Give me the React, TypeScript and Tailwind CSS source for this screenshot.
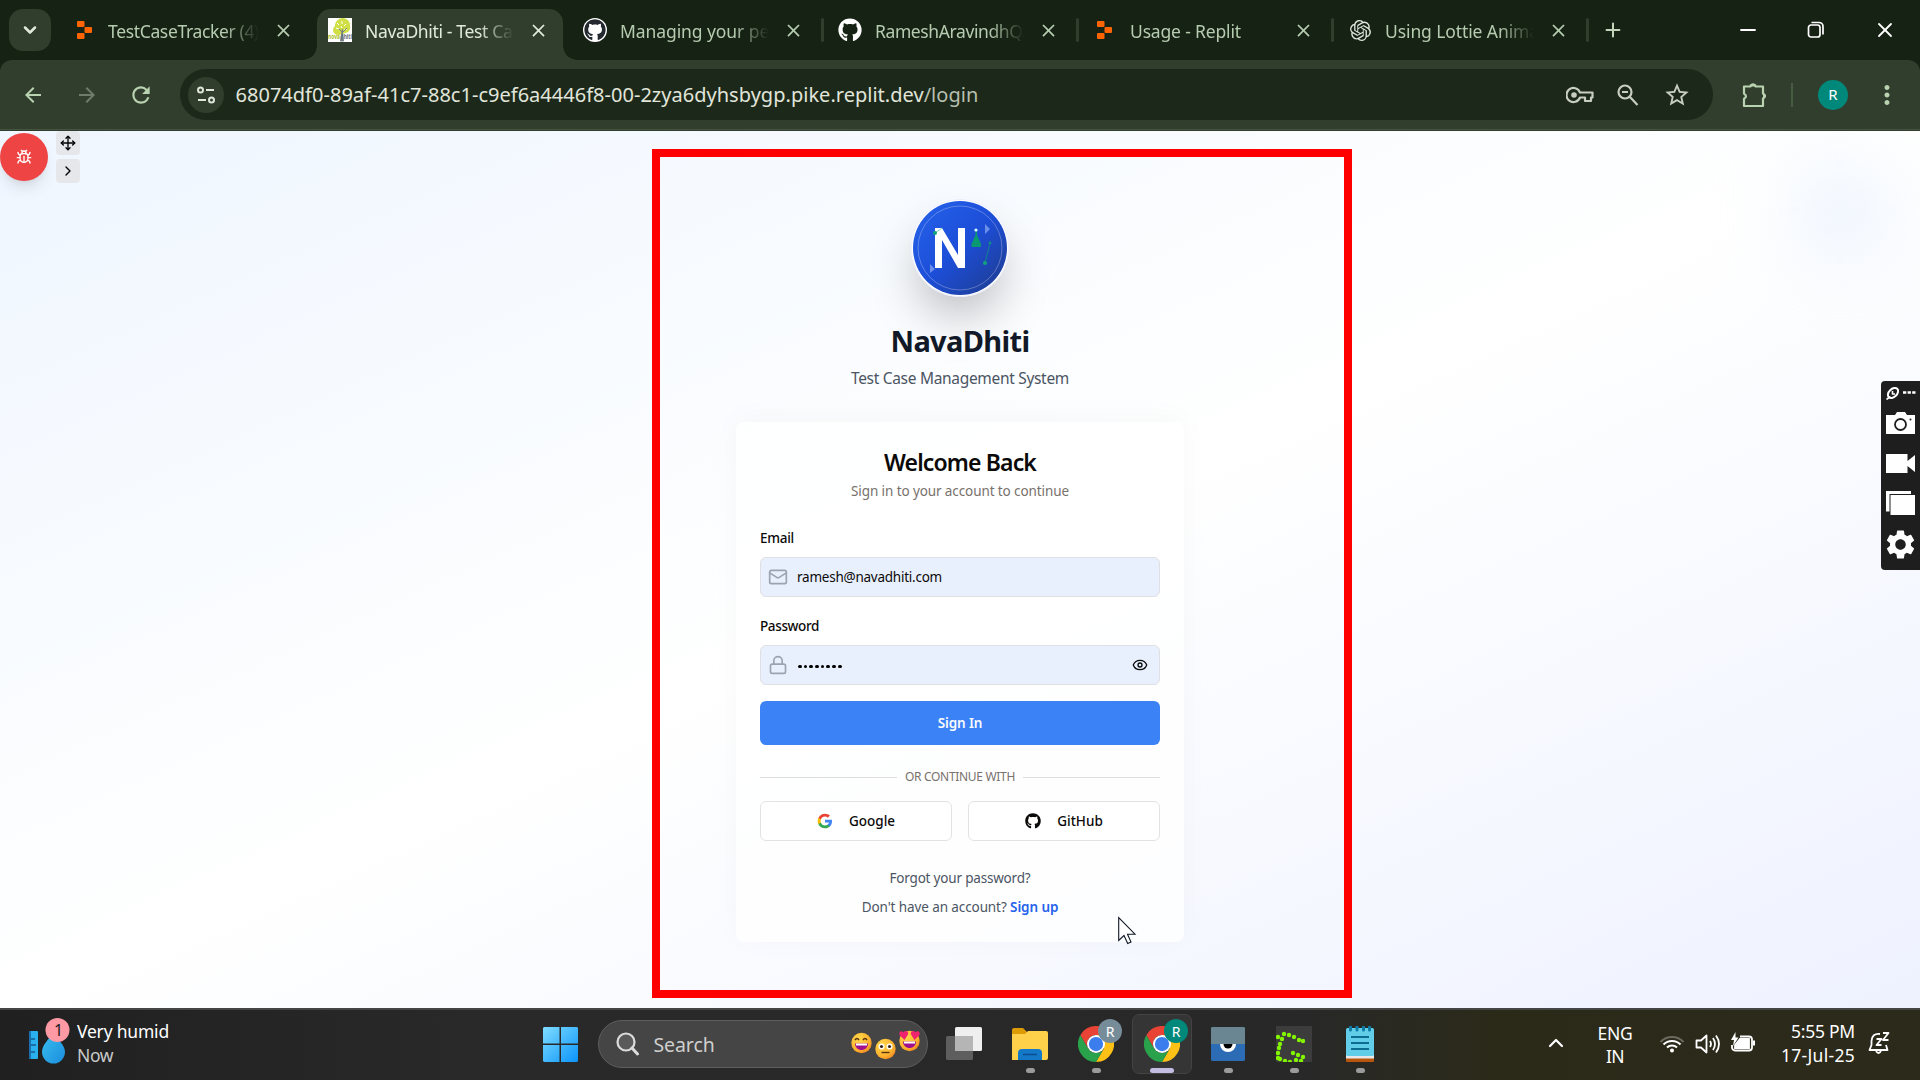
import React from "react";
import { ChevronDown, ChevronRight, ChevronUp, Bug, Eye, Lock, Mail, Minus, Move, Plus, X } from "lucide-react";
import { FaGithub } from "react-icons/fa";
import { SiOpenai } from "react-icons/si";
import { MdClose, MdStarBorder, MdRefresh, MdOutlineExtension, MdMoreVert, MdArrowBack, MdArrowForward, MdSettings } from "react-icons/md";

function ReplitIcon() {
  return (
    <svg width="15" height="18" viewBox="0 0 15 18" className="ml-[4px] fill-[#fc6404]">
      <rect x="0" y="0" width="7.5" height="6" rx="1" />
      <rect x="7.5" y="6" width="7.5" height="6" rx="1" />
      <rect x="0" y="12" width="7.5" height="6" rx="1" />
    </svg>
  );
}

function TreeIcon() {
  return (
    <svg width="24" height="24" viewBox="0 0 24 24">
      <rect width="24" height="24" fill="#fff" />
      <path d="M11 17c-3 .5-6-2-6-5 0-2 1-3 2-4 0-5 4-8 8-8 4 .5 7 3 7 7 1 4-1 8-5 8l-2 1z" fill="#cfdf45" />
      <path d="M9 5l2 2M14 3v3M18 6l-2 2M8 10l3 1M19 11l-3 1M13 8l1 2" stroke="#fff" strokeWidth="1" />
      <path d="M14.5 11v6l1 6h-3l1-6zM14 14l-3-3M15 14l4-4" stroke="#777f86" fill="#777f86" strokeWidth="1" />
      <text x="0" y="21" fontSize="6.5" fontWeight="700" textLength="12" lengthAdjust="spacingAndGlyphs" fill="#a9bf1e" fontFamily="Noto Sans, sans-serif">nova</text>
      <text x="12.500" y="21" fontSize="6.5" fontWeight="700" textLength="11.500" lengthAdjust="spacingAndGlyphs" fill="#686f78" fontFamily="Noto Sans, sans-serif">dhiti</text>
    </svg>
  );
}

function GithubDark() {
  return (
    <span className="flex size-6 items-center justify-center rounded-full bg-white">
      <FaGithub className="size-[22px] rounded-full bg-white text-[#24292f]" />
    </span>
  );
}

type TabProps = { icon: React.ReactNode; title: string; active?: boolean; divider?: boolean; cls: string };
function Tab({ icon, title, active, divider, cls }: TabProps) {
  return (
    <div className="flex w-[255px] shrink-0 items-end">
      <div className={active ? "relative flex h-[51px] w-[246px] items-center rounded-t-[14px] bg-[#313e2d] pl-[11px] text-[#e1eadb]" : "relative flex h-[51px] w-[246px] items-center pl-[11px] text-[#b6ccb0]"}>
        {active && <span className="absolute bottom-0 -left-[14px] size-[14px] bg-[radial-gradient(circle_at_0_0,transparent_13.5px,#313e2d_14px)]" />}
        {active && <span className="absolute bottom-0 -right-[14px] size-[14px] bg-[radial-gradient(circle_at_100%_0,transparent_13.5px,#313e2d_14px)]" />}
        <span className="mb-[9px] flex w-6 items-center">{icon}</span>
        <span className="mb-[7px] ml-[11px] w-[152px] overflow-hidden whitespace-nowrap pl-[2px] text-[17.5px] leading-[26px] [mask-image:linear-gradient(to_right,black_116px,transparent_151px)]">
          <span className={cls}>{title}</span>
        </span>
        <MdClose className="mb-[9px] ml-[13px] size-[21px] shrink-0" />
      </div>
      {divider && <span className="mb-[18px] ml-[3px] h-6 w-[3px] rounded bg-[#313e2d]" />}
    </div>
  );
}

function Chrome() {
  return (
    <svg width="36" height="36" viewBox="0 0 48 48">
      <path d="M24 12h20.8A24 24 0 0 1 24 48L34.4 30z" fill="#fcc016" />
      <path d="M3.2 12l10.4 18A12 12 0 0 0 34.4 30L24 48A24 24 0 0 1 3.2 12z" fill="#2aa24c" />
      <path d="M3.2 12A24 24 0 0 1 44.8 12H24A12 12 0 0 0 13.6 30z" fill="#e94335" />
      <circle cx="24" cy="24" r="12" fill="#fff" />
      <circle cx="24" cy="24" r="9.5" fill="#3b7ded" />
    </svg>
  );
}

function TaskItem({ children, active, still }: { children: React.ReactNode; active?: boolean; still?: boolean }) {
  return (
    <div className="flex w-[66px] justify-center">
      <div className={active ? "relative flex h-[60px] w-[60px] flex-col items-center rounded-[7px] border border-[#434343] bg-[#353535] pt-[11px]" : "relative flex h-[60px] w-[60px] flex-col items-center pt-3"}>
        {children}
        {!still && <span className={active ? "mt-[6px] h-[5px] w-6 rounded-full bg-[#c3bde2]" : "mt-[6px] h-[5px] w-[9px] rounded-full bg-[#9b9b9b]"} />}
      </div>
    </div>
  );
}

function Logo() {
  return (
    <svg width="98" height="98" viewBox="0 0 98 98" className="rounded-full shadow-[0_25px_50px_-8px_rgba(0,0,0,0.28)]">
      <defs>
        <linearGradient id="disc" x1="0" y1="0" x2="1" y2="1">
          <stop offset="0" stopColor="#2563eb" />
          <stop offset=".5" stopColor="#1d4ed8" />
          <stop offset="1" stopColor="#1e3a8a" />
        </linearGradient>
      </defs>
      <circle cx="49" cy="49" r="48.7" fill="#fff" stroke="#dfe0fa" strokeWidth=".6" />
      <circle cx="49" cy="49" r="47" fill="url(#disc)" />
      <circle cx="49" cy="49" r="42" fill="none" stroke="#fff" strokeOpacity=".28" />
      <path d="M24 29h7l16 27V29h7v40h-7L31 41v28h-7z" fill="#fff" />
      <path d="M74 25l5 5-5 5zM19 65l5 5-5 4z" fill="#6d8fec" />
      <path d="M24 34l7-5" stroke="#7fd0b6" strokeWidth="1" />
      <circle cx="24" cy="34" r="2" fill="#10a37a" />
      <path d="M79 44l-5 20" stroke="#10907f" strokeWidth=".8" />
      <circle cx="79" cy="44" r="1.4" fill="#10907f" />
      <circle cx="74" cy="64" r="2" fill="#10a37a" />
      <path d="M64.500 31h1.500v5l4 9q.5 3-1 3h-7.500q-1.500 0-1-3l4-9z" fill="#0a9a72" />
      <circle cx="65" cy="31" r="1.600" fill="#dff" />
    </svg>
  );
}

const Google = () => (
  <svg viewBox="0 0 24 24" className="size-4">
    <path fill="#4285F4" d="M22.560 12.250c0-.78-.07-1.530-.2-2.250H12v4.260h5.920c-.26 1.370-1.040 2.530-2.210 3.310v2.770h3.570c2.080-1.920 3.280-4.740 3.280-8.090z" />
    <path fill="#34A853" d="M12 23c2.970 0 5.460-.98 7.280-2.660l-3.570-2.770c-.98.66-2.230 1.060-3.710 1.060-2.860 0-5.290-1.930-6.160-4.530H2.180v2.840C3.990 20.530 7.700 23 12 23z" />
    <path fill="#FBBC05" d="M5.840 14.090c-.22-.66-.35-1.360-.35-2.090s.13-1.430.35-2.090V7.070H2.180C1.430 8.550 1 10.220 1 12s.43 3.450 1.180 4.930l3.660-2.840z" />
    <path fill="#EA4335" d="M12 5.380c1.620 0 3.060.56 4.210 1.640l3.150-3.150C17.450 2.090 14.970 1 12 1 7.700 1 3.990 3.470 2.180 7.070l3.660 2.840c.87-2.600 3.300-4.530 6.160-4.530z" />
  </svg>
);

function Face({ mood }: { mood: "laugh" | "flat" | "love" }) {
  return (
    <svg width="21" height="22" viewBox="0 0 21 22">
      <defs>
        <radialGradient id="face" cx=".35" cy=".3" r=".8">
          <stop offset="0" stopColor="#ffd84a" />
          <stop offset=".7" stopColor="#fbb02e" />
          <stop offset="1" stopColor="#f08020" />
        </radialGradient>
      </defs>
      <circle cx="10.500" cy="11" r="10.200" fill="url(#face)" />
      {mood === "laugh" && <path d="M4 8q2-3 4 0M12 8q2-3 4 0" fill="none" stroke="#5a3212" strokeWidth="1.600" />}
      {mood !== "flat" && <path d="M4 11.500h13c0 4-3 6.500-6.500 6.500S4 15.500 4 11.500z" fill="#a0108c" />}
      {mood !== "flat" && <path d="M5 11.500h11v2H5z" fill="#fff" />}
      {mood === "flat" && <g><circle cx="6.500" cy="8.500" r="3" fill="#fff" /><circle cx="14.500" cy="8.500" r="3" fill="#fff" /><circle cx="6.500" cy="8.500" r="1.600" fill="#3a2415" /><circle cx="14.500" cy="8.500" r="1.600" fill="#3a2415" /><path d="M6.500 14.500h8" stroke="#5a3212" strokeWidth="1.400" /></g>}
      {mood === "love" && <path d="M5.500 10L.5 5C-.5 1 3 .5 4.500 2.500 6 0 10 1 9 4.500zM15.500 10L12 4.500C11 1 15 0 16.500 2.500 18 .5 21.500 1 20.500 5z" fill="#f0246e" />}
    </svg>
  );
}

const greenDots = [[2, 11], [8, 8], [13, 9], [18, 11], [23, 14], [27, 15], [6, 13], [4, 18], [3, 22], [2, 27], [2, 32], [4, 33], [9, 35], [14, 36], [17, 27], [22, 29], [27, 31], [20, 34], [25, 35]];

export default function App() {
  return (
    <div className="relative flex h-[1080px] w-[1920px] flex-col overflow-hidden font-['Noto_Sans','Open_Sans',sans-serif]">
      <header className="flex h-[60px] shrink-0 items-end bg-[#162214]">
        <div className="mb-[9px] ml-[9px] mr-[11px] flex size-[42px] items-center justify-center rounded-[14px] bg-[#313e2d]">
          <ChevronDown className="size-5 text-[#e1eadb]" strokeWidth={3} />
        </div>
        <Tab icon={<ReplitIcon />} title="TestCaseTracker (4)" cls="-ml-[2px] tracking-[-0.35px]" />
        <Tab icon={<TreeIcon />} title="NavaDhiti - Test Case" active cls="tracking-[-0.35px]" />
        <Tab icon={<GithubDark />} title="Managing your personal" cls="tracking-[-0.08px]" divider />
        <Tab icon={<FaGithub className="size-6 text-white" />} title="RameshAravindhQA" cls="tracking-[-0.4px]" divider />
        <Tab icon={<ReplitIcon />} title="Usage - Replit" cls="tracking-[-0.16px]" divider />
        <Tab icon={<SiOpenai className="ml-[2px] size-[21px] text-[#dfe5dc]" />} title="Using Lottie Animation" cls="tracking-[-0.1px]" divider />
        <Plus className="mb-[19px] ml-[10px] size-[22px] text-[#c3d6bc]" strokeWidth={2.200} />
        <div className="mb-[18px] ml-auto flex items-center text-white">
          <Minus className="mr-[47px] size-6" strokeWidth={1.800} />
          <svg width="18" height="18" viewBox="0 0 18 18" fill="none" stroke="white" strokeWidth="1.700" className="mr-[48px]">
            <rect x="1.500" y="4" width="11.500" height="12" rx="2.500" />
            <path d="M4.500 1.500h7.500a4 4 0 0 1 4 4v8" />
          </svg>
          <X className="mr-[23px] size-6" strokeWidth={1.800} />
        </div>
      </header>

      <div className="bg-[#162214]">
        <div className="flex h-[69px] items-center rounded-t-[12px] bg-[#313e2d]">
          <MdArrowBack className="ml-[21px] size-6 text-[#b9d3b1]" />
          <MdArrowForward className="ml-[30px] size-6 text-[#6f7c69]" />
          <MdRefresh className="ml-[29px] size-[26px] text-[#b9d3b1]" />
          <div className="ml-[26px] flex h-[51px] w-[1533px] items-center rounded-full bg-[#1c291a] pl-2">
            <span className="flex size-9 items-center justify-center rounded-full bg-[#313e2d]">
              <svg width="18" height="18" viewBox="0 0 18 18" fill="none" stroke="#dfe5da" strokeWidth="2">
                <circle cx="3.500" cy="4" r="2.500" /><path d="M9 4h8M1 14h8" /><circle cx="14.500" cy="14" r="2.500" />
              </svg>
            </span>
            <span className="ml-[11.5px] whitespace-nowrap text-[20px] tracking-[0.02px] text-[#e1e5da]">68074df0-89af-41c7-88c1-c9ef6a4446f8-00-2zya6dyhsbygp.pike.replit.dev<span className="text-[#b7bfae]">/login</span></span>
            <div className="ml-auto mr-[22px] flex items-center text-[#c7cdc0]">
              <svg width="28" height="20" viewBox="0 0 28 20" fill="none" stroke="currentColor" strokeWidth="2.200">
                <path d="M14 7.500A7 7 0 1 0 14 12.500h5v3.500h6V12.500h1.500V7.500z" strokeLinejoin="round" /><circle cx="8" cy="10" r="2.800" fill="currentColor" stroke="none" />
              </svg>
              <svg width="22" height="22" viewBox="0 0 22 22" fill="none" stroke="currentColor" strokeWidth="2.200" className="ml-[23px]">
                <circle cx="8" cy="8" r="6.500" /><path d="M12.500 12.500l8 8.500M5 8h6" />
              </svg>
              <MdStarBorder className="ml-[24px] size-[28px]" />
            </div>
          </div>
          <svg width="28" height="28" viewBox="0 0 28 28" className="ml-[28px]" fill="none" stroke="#b9d3b1" strokeWidth="2.200" strokeLinejoin="round">
            <path d="M3 5.500h6.500a2.500 2 0 0 1 5 0H22v7a2.500 2.800 0 0 1 0 5V25H3v-7.200q4-2.300 0-5.200z" />
            <path d="M9.500 5.500a2.500 3 0 0 1 5 0zM22 12.300a3 2.700 0 0 1 0 5.400z" fill="#b9d3b1" stroke="none" />
          </svg>
          <span className="ml-[22px] h-6 w-[2px] bg-[#475a42]" />
          <span className="ml-[25px] flex size-[30px] items-center justify-center rounded-full bg-[#00897b] text-[15px] text-white">R</span>
          <MdMoreVert className="ml-[24px] size-[30px] text-[#b9d3b1]" />
        </div>
        <div className="h-[2px] border-t border-[#465242] bg-[#313e2d]" />
      </div>

      <main className="relative h-[877px] shrink-0 overflow-hidden bg-linear-to-br from-[#eff6ff] via-white to-[#eef2ff]">
        <div className="absolute left-[1795px] top-[34px] size-[90px] rounded-full bg-[#dbeafe]/60 blur-2xl" />
        <div className="absolute left-0 top-0 flex gap-2">
          <div className="mt-[2px] flex size-12 items-center justify-center rounded-full bg-[#ef4444] shadow-lg">
            <Bug className="size-4 text-white" />
          </div>
          <div className="flex flex-col gap-1">
            <span className="flex size-6 items-center justify-center rounded bg-[#e5e7eb]"><Move className="size-4 text-black" /></span>
            <span className="flex size-6 items-center justify-center rounded bg-[#e5e7eb]"><ChevronRight className="size-4 text-black" /></span>
          </div>
        </div>

        <div className="mx-auto flex w-[448px] flex-col items-center pt-[68px]">
          <Logo />
          <h1 className="mt-[26px] text-[29px] font-bold leading-9 tracking-[-0.65px] text-[#111827]">NavaDhiti</h1>
          <p className="mt-[7px] text-[15.500px] leading-6 tracking-[-0.31px] text-[#4b5563]">Test Case Management System</p>
          <section className="mt-8 flex h-[520px] w-full flex-col rounded-lg bg-white/80 px-6 shadow-[0_-4px_30px_rgba(0,0,0,0.03)]">
            <h2 className="mt-6 text-center text-[23px] font-semibold leading-8 tracking-[-0.86px] text-[#0c0a09]">Welcome Back</h2>
            <p className="mt-[3px] text-center text-[13.500px] leading-5 tracking-[-0.1px] text-[#78716c]">Sign in to your account to continue</p>
            <label className="mt-[27px] text-[13.500px] font-medium leading-5 tracking-[-0.27px] text-[#0c0a09]">Email</label>
            <div className="mt-[9px] flex h-10 items-center rounded-md border border-[#e0e0e4] bg-[#e8f0fe] pl-[7px]">
              <Mail className="size-5 text-[#9ca3af]" />
              <span className="ml-[9px] pt-px text-[13.500px] tracking-[-0.24px] text-[#0c0a09]">ramesh@navadhiti.com</span>
            </div>
            <label className="mt-[19px] text-[13.500px] font-medium leading-5 tracking-[-0.38px] text-[#0c0a09]">Password</label>
            <div className="mt-[9px] flex h-10 items-center rounded-md border border-[#e0e0e4] bg-[#e8f0fe] pl-[7px]">
              <Lock className="size-5 text-[#9ca3af]" />
              <span className="ml-[10px] mt-[3px] flex gap-[2px]">
                {Array.from({ length: 8 }, (_, i) => <i key={i} className="size-[3.700px] rounded-full bg-black" />)}
              </span>
              <Eye className="ml-auto mr-[11px] size-4 text-[#0c0a09]" />
            </div>
            <button className="mt-4 h-11 rounded-md bg-[#3b82f6] text-[13.500px] font-semibold tracking-[-0.13px] text-[#f8fafc]">Sign In</button>
            <div className="mt-6 flex h-4 items-center gap-2">
              <span className="h-px flex-1 bg-[#e0dedd]" />
              <span className="text-[12px] leading-4 tracking-[-0.31px] text-[#78716c]">OR CONTINUE WITH</span>
              <span className="h-px flex-1 bg-[#e0dedd]" />
            </div>
            <div className="mt-4 grid grid-cols-2 gap-4 text-[13.500px] font-medium text-[#0c0a09]">
              <button className="flex h-10 items-center justify-center gap-4 rounded-md border border-[#e5e3e2] bg-white"><Google />Google</button>
              <button className="flex h-10 items-center justify-center gap-4 rounded-md border border-[#e5e3e2] bg-white"><FaGithub className="size-4" />GitHub</button>
            </div>
            <p className="mt-[27px] text-center text-[13.500px] leading-5 tracking-[-0.19px] text-[#4b5563]">Forgot your password?</p>
            <p className="mt-[9px] text-center text-[13.500px] leading-5 tracking-[-0.1px] text-[#4b5563]">Don't have an account? <span className="font-semibold text-[#2563eb]">Sign up</span></p>
          </section>
        </div>

        <div className="pointer-events-none absolute left-[652px] top-[18px] h-[849px] w-[700px] border-8 border-[#ff0000]" />
        <svg width="19" height="29" viewBox="0 0 19 29" className="absolute left-[1118px] top-[785px]">
          <path d="M.7 1.500v23l5.300-5 3.700 8 3.300-1.500-3.500-7.800h7.500z" fill="#fff" stroke="#111827" strokeWidth="1.100" />
        </svg>

        <aside className="absolute right-0 top-[250px] flex h-[189px] w-[39px] flex-col items-center rounded-l-[4px] bg-[#1e1e1e]">
          <svg width="30" height="14" viewBox="0 0 30 14" className="mt-[5px]" fill="none" stroke="#fff">
            <ellipse cx="7" cy="7" rx="6" ry="4" transform="rotate(-45 7 7)" strokeWidth="2" /><path d="M.5 13.500l4-3M6.500 5v3H9" strokeWidth="1.600" />
            <path d="M17 6.500h12.500" strokeWidth="2.500" strokeDasharray="3.300 1.300" />
          </svg>
          <svg width="29" height="22" viewBox="0 0 29 22" className="mt-[12px]">
            <path d="M0 3h9l2-3h8l2 3h8v19H0z" fill="#fff" /><circle cx="14.500" cy="12.500" r="5.500" fill="none" stroke="#1e1e1e" strokeWidth="1.800" /><circle cx="24.500" cy="7.500" r="1" fill="#1e1e1e" />
          </svg>
          <svg width="29" height="19" viewBox="0 0 29 19" className="mt-[20px]"><path d="M0 0h21.500v7L29 1v17l-7.500-6v7H0z" fill="#fff" /></svg>
          <svg width="29" height="24" viewBox="0 0 29 24" className="mt-[18px]"><path d="M0 0h25v3H3.500v17.500H0z" fill="#fff" /><path d="M4.500 4H29v20H4.500z" fill="#fff" /></svg>
          <MdSettings className="mt-[12px] size-[35px] text-white" />
        </aside>
      </main>

      <footer className="flex h-[72px] items-start border-t-2 border-[#454545] bg-[linear-gradient(90deg,#202020_0%,#292929_25%,#282828_68%,#2b2a19_78%,#2c2a1b_100%)]">
        <div className="flex w-[530px] items-start pl-[28px] pt-[8px]">
          <svg width="42" height="48" viewBox="0 0 42 48">
            <defs><linearGradient id="drop" x1="0" y1="0" x2="1" y2="1"><stop offset="0" stopColor="#39c0f0" /><stop offset="1" stopColor="#1b8ddd" /></linearGradient></defs>
            <rect x="1" y="13" width="9" height="28" rx="1" fill="#2ab0ee" /><rect x="1" y="13" width="2" height="28" fill="#1b6fae" />
            <path d="M3 21h4M3 27h5M3 34h4" stroke="#17588f" strokeWidth="1.500" />
            <path d="M25 14c4 8 12 12 12 20a11.500 11.500 0 0 1-23 0c0-8 8-13 11-20z" fill="url(#drop)" />
            <circle cx="29.500" cy="12" r="12" fill="#ff99a4" />
            <text x="30.500" y="17.500" fontSize="16" textAnchor="middle" fontFamily="Noto Sans, sans-serif" fill="#1a1a1a">1</text>
          </svg>
          <div className="ml-[7px] text-[17.500px] leading-6 text-white">
            <div className="mt-px tracking-[-0.2px]">Very humid</div>
            <div className="tracking-[-0.4px] text-[#c9c9c9]">Now</div>
          </div>
        </div>
        <div className="flex items-start pt-1">
          <svg width="35" height="35" viewBox="0 0 35 35" className="ml-[13px] mt-[13px]">
            <defs><linearGradient id="win" x1="0" y1="0" x2="1" y2="1"><stop offset="0" stopColor="#7fdcff" /><stop offset="1" stopColor="#0a94fa" /></linearGradient></defs>
            <path d="M1 0h15.500v16.500H0V1zM18 0h16l1 1v15.500H18zM0 18h16.500v17H1l-1-1zM18 18h17v16l-1 1H18z" fill="url(#win)" />
          </svg>
          <div className="ml-5 mt-[6px] flex h-12 w-[330px] items-center rounded-full border border-[#5e5e5e] bg-[#454545] pl-[17px]">
            <svg width="23" height="24" viewBox="0 0 23 24" fill="none" stroke="#dcdcdc" strokeWidth="2.200"><circle cx="10" cy="10" r="8.500" fill="#5a5a5a" /><path d="M16 16l5.500 6" strokeWidth="3" strokeLinecap="round" /></svg>
            <span className="ml-[14.5px] pt-px text-[19.500px] tracking-[-0.1px] text-[#cfcfcf]">Search</span>
            <div className="ml-auto mr-[7px] flex gap-[3px]"><span className="pt-[3px]"><Face mood="laugh" /></span><span className="pt-[9px]"><Face mood="flat" /></span><span className="pt-[1px]"><Face mood="love" /></span></div>
          </div>
          <div className="ml-[3px] flex">
            <TaskItem still>
              <svg width="38" height="36" viewBox="0 0 38 36"><rect x="10" y="1" width="27" height="24" rx="1.500" fill="#efefef" /><rect x="1" y="10" width="27" height="24" rx="1.500" fill="#5e5e5e" /><rect x="10" y="10" width="18" height="15" fill="#b5b5b5" /></svg>
            </TaskItem>
            <TaskItem>
              <svg width="36" height="36" viewBox="0 0 36 36"><path d="M0 4q0-2 2-2h9l4 4v5H0z" fill="#dd9c06" /><path d="M0 8h13l3-3h18q2 0 2 2v25q0 2-2 2H0z" fill="#ffd04a" /><path d="M6 34v-7q0-4 4-4h16q4 0 4 4v7z" fill="#1478c8" /><path d="M11 28.500h14" stroke="#0b4f8c" strokeWidth="1.500" /></svg>
            </TaskItem>
            <TaskItem><Chrome /><span className="absolute left-[32px] top-[5px] flex size-6 items-center justify-center rounded-full bg-[#778c99] text-[14px] text-white">R</span></TaskItem>
            <TaskItem active><Chrome /><span className="absolute left-[31px] top-[4px] flex size-6 items-center justify-center rounded-full bg-[#00897b] text-[14px] text-white">R</span></TaskItem>
            <TaskItem>
              <svg width="36" height="36" viewBox="0 0 36 36"><rect x="1" y="1" width="34" height="34" rx="1.500" fill="#2b6cb5" /><path d="M10 18a8 8 0 0 0 16 0z" fill="#fff" /><path d="M13.500 18a4.500 4.500 0 0 0 9 0z" fill="#000" /><path d="M1 2.500Q1 1 2.500 1h31Q35 1 35 2.500V18H1z" fill="#6a8693" /></svg>
            </TaskItem>
            <TaskItem>
              <svg width="36" height="36" viewBox="0 0 36 36"><rect width="36" height="36" fill="#3c3c3c" />{greenDots.map(([x, y], i) => <circle key={i} cx={x} cy={y} r="2.200" fill="#83f500" />)}</svg>
            </TaskItem>
            <TaskItem>
              <svg width="28" height="36" viewBox="0 0 28 36"><rect x="0" y="28" width="28" height="8" rx="1" fill="#b8560e" /><rect x="0" y="28" width="28" height="4.500" fill="#e8e8e8" /><rect x="0" y="2" width="28" height="28" rx="1.500" fill="#62cde9" /><path d="M5 11h18M5 17h18M5 23h18" stroke="#0b6d92" strokeWidth="1.800" /><path d="M4.500 1v3M11 1v3M17.500 1v3M23.500 1v3" stroke="#0e7ca5" strokeWidth="3" strokeLinecap="round" /></svg>
            </TaskItem>
          </div>
        </div>
        <div className="ml-auto flex items-start pt-[12px] text-[17.500px] leading-6 text-white">
          <ChevronUp className="mt-[9px] size-6" strokeWidth={2.200} />
          <div className="ml-[24px] w-[46px] text-center"><div className="-mt-px tracking-[-0.26px]">ENG</div><div className="-mt-[1px] tracking-[-0.5px]">IN</div></div>
          <svg width="26" height="20" viewBox="0 0 26 20" className="mt-[12px] ml-[21px]" fill="none" stroke="#fff" strokeWidth="2">
            <path d="M1.500 8a16 16 0 0 1 23 0" stroke="#6b6a5e" /><path d="M4.500 10.500a12 12 0 0 1 17 0M8 13.500a7 7 0 0 1 10 0" /><circle cx="13" cy="16.500" r="2" fill="#fff" stroke="none" />
          </svg>
          <svg width="26" height="22" viewBox="0 0 26 22" className="mt-[11px] ml-[10px]" fill="none" stroke="#fff" strokeWidth="1.800" strokeLinejoin="round">
            <path d="M1.500 7.500v7h4.500l5.500 5v-17L6 7.500zM15 8q2 3 0 6M18 5q4 6 0 12M21 2.500q6 8.500 0 17" />
          </svg>
          <svg width="26" height="22" viewBox="0 0 26 22" className="mt-[10px] ml-[9px]" fill="none" stroke="#fff" strokeWidth="1.800">
            <path d="M10 4.500h9a3 3 0 0 1 3 3v8a3 3 0 0 1-3 3H5a3 3 0 0 1-3-3V13" /><path d="M10 7h9v9H5v-3z" fill="#fff" /><path d="M23 8.500h2v5h-2z" fill="#fff" stroke="none" /><path d="M5.500 0L1 8h3l-1 6 5.500-8.500H5.500z" fill="#fff" stroke="none" />
          </svg>
          <div className="ml-[23px] -mt-[3px] w-[76px] whitespace-nowrap text-right"><div className="tracking-[-0.25px]">5:55 PM</div><div className="tracking-[0.29px]">17-Jul-25</div></div>
          <svg width="23" height="24" viewBox="0 0 23 24" className="mt-[9px] ml-[13px] mr-[29px]" fill="none" stroke="#fff" strokeWidth="1.800" strokeLinejoin="round">
            <path d="M12 3q-8-1-8.500 7v4L1.500 19h18l-1.500-5" /><path d="M8 20q2.500 4 5 0" /><path d="M8.500 8h5l-5 6h5M15 2h5.500L15 9h5.500" />
          </svg>
        </div>
      </footer>
    </div>
  );
}
